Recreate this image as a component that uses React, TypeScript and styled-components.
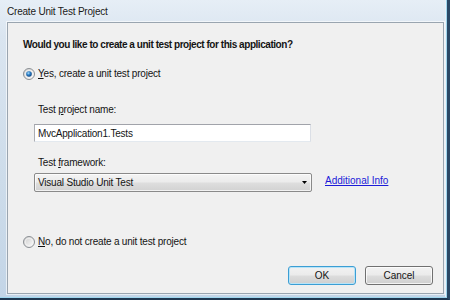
import React, { FC, ReactNode } from "react";
import styled, { createGlobalStyle, css } from "styled-components";

const GlobalStyle = createGlobalStyle`
	html, body {
		margin: 0;
		padding: 0;
		background: #c9d9e8;
	}
	body {
		font-family: "Liberation Sans", Arial, sans-serif;
		font-size: 10px;
		letter-spacing: -0.2px;
		color: #141414;
	}
`;

const Window = styled.div`
	box-sizing: border-box;
	width: 450px;
	height: 300px;
	display: flex;
	flex-direction: column;
	padding: 0 3px 4px 7px;
	background: linear-gradient(180deg, #e6eef6 0%, #dae5f0 12%, #cddcea 60%, #c3d5e7 100%);
	border-right: 3px solid #2a4866;
	border-bottom: 2px solid #1e3650;
	box-shadow: inset -1px -1px 0 #9fd6ee, inset -2px 0 0 #e9f1f8;
`;

const TitleBar = styled.div`
	height: 22px;
	display: flex;
	align-items: center;
	flex-shrink: 0;
`;

const Title = styled.span`
	font-size: 10px;
	color: #1a1a1a;
	text-shadow: 0 0 6px rgba(255, 255, 255, 0.9);
`;

const Client = styled.div`
	flex: 1;
	display: flex;
	flex-direction: column;
	background: #f0f0f0;
	border: 1px solid #9aa5b0;
	padding: 15px 10px 8px 15px;
	box-shadow: 0 0 0 1px rgba(255, 255, 255, 0.6);
`;

const Heading = styled.div`
	font-weight: 700;
	line-height: 14px;
	letter-spacing: -0.45px;
`;

const RadioRow = styled.label<{ $gap: number }>`
	display: flex;
	align-items: center;
	height: 14px;
	margin-top: ${(p) => p.$gap}px;
	cursor: default;
`;

const RadioText = styled.span`
	margin-left: 3px;
	line-height: 14px;
`;

const AccessKey = styled.span`
	text-decoration: underline;
`;

const Options = styled.div`
	display: flex;
	flex-direction: column;
	padding-left: 11px;
`;

const FieldLabel = styled.div<{ $gap: number }>`
	line-height: 14px;
	padding-left: 4px;
	margin-top: ${(p) => p.$gap}px;
`;

const TextBox = styled.div`
	box-sizing: border-box;
	width: 277px;
	height: 18px;
	margin-top: 7px;
	display: flex;
	align-items: center;
	padding-left: 3px;
	background: #ffffff;
	border: 1px solid #abadb3;
	border-top-color: #a1a3aa;
	border-bottom-color: #e3e9ef;
	border-right-color: #dbdfe6;
`;

const ComboRow = styled.div`
	display: flex;
	align-items: center;
	margin-top: 3px;
`;

const Combo = styled.div`
	box-sizing: border-box;
	width: 278px;
	height: 19px;
	display: flex;
	align-items: center;
	justify-content: space-between;
	padding: 0 4px 0 3px;
	border: 1px solid #8a8a8a;
	border-radius: 2px;
	background: linear-gradient(180deg, #f4f4f4 0%, #ebebeb 48%, #dedede 52%, #d2d2d2 100%);
	box-shadow: inset 0 0 0 1px rgba(255, 255, 255, 0.7);
`;

const Link = styled.a`
	margin-left: 13px;
	margin-top: -4px;
	color: #1b1bd8;
	letter-spacing: 0;
	text-decoration: underline;
	cursor: pointer;
`;

const ButtonRow = styled.div`
	margin-top: auto;
	display: flex;
	justify-content: flex-end;
	gap: 9px;
`;

const Button = styled.button<{ $primary?: boolean }>`
	box-sizing: border-box;
	width: 68px;
	height: 19px;
	padding: 0;
	font-family: inherit;
	font-size: 10px;
	color: #141414;
	border: 1px solid #707070;
	border-radius: 3px;
	background: linear-gradient(180deg, #f2f2f2 0%, #ebebeb 48%, #dddddd 52%, #cfcfcf 100%);
	box-shadow: inset 0 0 0 1px rgba(255, 255, 255, 0.75);
	${(p) =>
		p.$primary &&
		css`
			border-color: #3c9ed4;
			box-shadow: inset 0 0 0 1px #b8e4f8;
		`}
`;

const RadioMark: FC<{ checked?: boolean }> = ({ checked }) => (
	<svg width="12" height="12" viewBox="0 0 12 12">
		<defs>
			<linearGradient id="rFill" x1="0" y1="0" x2="1" y2="1">
				<stop offset="0" stopColor="#c9c9c9" />
				<stop offset="1" stopColor="#ffffff" />
			</linearGradient>
			<radialGradient id="rDot" cx="0.4" cy="0.35" r="0.7">
				<stop offset="0" stopColor="#a8dcf8" />
				<stop offset="0.45" stopColor="#2c7fc8" />
				<stop offset="1" stopColor="#0c3e78" />
			</radialGradient>
		</defs>
		<circle cx="6" cy="6" r="5.5" fill="url(#rFill)" stroke="#8b8f94" strokeWidth="1" />
		<circle cx="6" cy="6" r="3.8" fill="none" stroke="#f4f4f4" strokeWidth="0.8" />
		{checked && <circle cx="6" cy="6" r="2.8" fill="url(#rDot)" />}
	</svg>
);

const Radio: FC<{ checked?: boolean; gap: number; children: ReactNode }> = ({ checked, gap, children }) => (
	<RadioRow $gap={gap}>
		<RadioMark checked={checked} />
		<RadioText>{children}</RadioText>
	</RadioRow>
);

const App: FC = () => (
	<>
		<GlobalStyle />
		<Window>
			<TitleBar>
				<Title>Create Unit Test Project</Title>
			</TitleBar>
			<Client>
				<Heading>Would you like to create a unit test project for this application?</Heading>
				<Radio checked gap={15}>
					<AccessKey>Y</AccessKey>es, create a unit test project
				</Radio>
				<Options>
					<FieldLabel $gap={22}>
						Test <AccessKey>p</AccessKey>roject name:
					</FieldLabel>
					<TextBox>MvcApplication1.Tests</TextBox>
					<FieldLabel $gap={14}>
						Test <AccessKey>f</AccessKey>ramework:
					</FieldLabel>
					<ComboRow>
						<Combo>
							<span>Visual Studio Unit Test</span>
							<svg width="5" height="3" viewBox="0 0 5 3">
								<path d="M0 0h5L2.5 3z" fill="#000" />
							</svg>
						</Combo>
						<Link>Additional Info</Link>
					</ComboRow>
				</Options>
				<Radio gap={43}>
					<AccessKey>N</AccessKey>o, do not create a unit test project
				</Radio>
				<ButtonRow>
					<Button $primary>OK</Button>
					<Button>Cancel</Button>
				</ButtonRow>
			</Client>
		</Window>
	</>
);

export default App;
